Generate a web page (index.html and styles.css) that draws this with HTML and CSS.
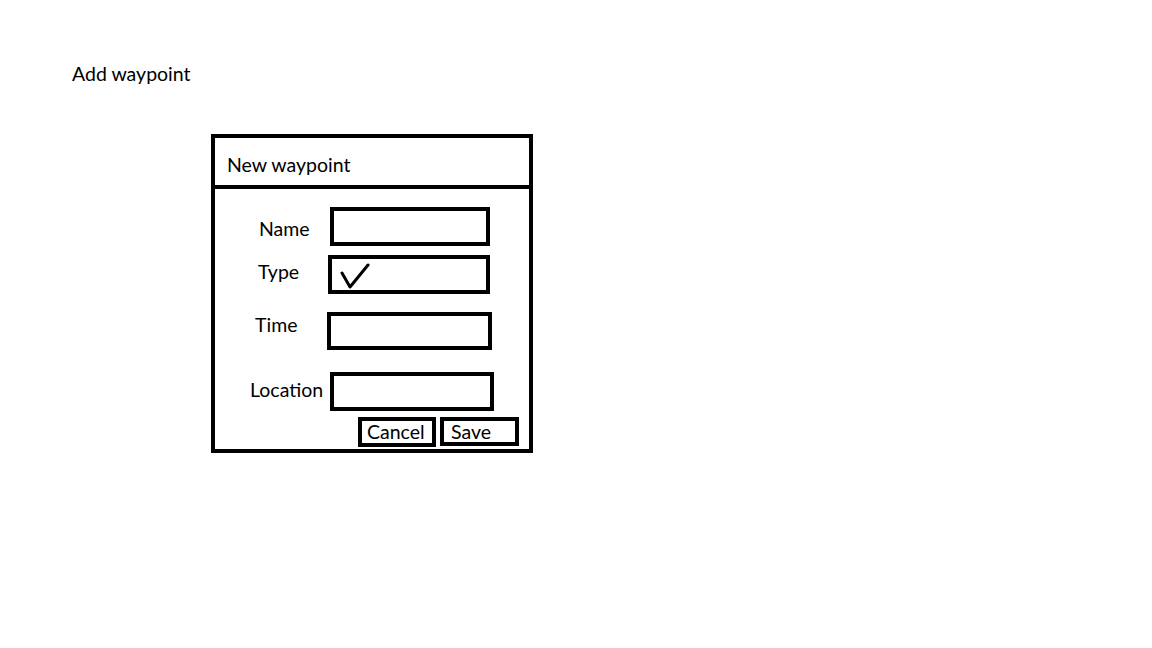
FILE: index.html
```html
<!DOCTYPE html>
<html lang="en">
<head>
<meta charset="utf-8">
<title>Add waypoint</title>
<link rel="stylesheet" href="styles.css">
</head>
<body>
  <div class="page">
    <h1 class="page-title">Add waypoint</h1>
    <div class="dialog">
      <div class="dialog-header">New waypoint</div>
      <div class="dialog-body">
        <div class="row row-name">
          <span class="label">Name</span>
          <div class="field"></div>
        </div>
        <div class="row row-type">
          <span class="label">Type</span>
          <div class="field">
            <svg class="check" width="30" height="26" viewBox="0 0 30 26"><path d="M2 10 L10 24 L28 2" fill="none" stroke="#000" stroke-width="3" stroke-linecap="round" stroke-linejoin="round"/></svg>
          </div>
        </div>
        <div class="row row-time">
          <span class="label">Time</span>
          <div class="field"></div>
        </div>
        <div class="row row-location">
          <span class="label">Location</span>
          <div class="field"></div>
        </div>
        <div class="actions">
          <div class="btn btn-cancel">Cancel</div>
          <div class="btn btn-save">Save</div>
        </div>
      </div>
    </div>
  </div>
</body>
</html>
```

FILE: styles.css
```css
html, body {
  margin: 0;
  padding: 0;
  background: #fff;
}

body {
  font-family: Lato, "Liberation Sans", sans-serif;
  font-size: 19.5px;
  color: #000;
  width: 1152px;
  height: 648px;
  overflow: hidden;
}

.page {
  display: flex;
  flex-direction: column;
  align-items: flex-start;
}

.page-title {
  margin: 64px 0 0 72px;
  font-size: 19.5px;
  font-weight: normal;
  line-height: 20px;
}

.dialog {
  margin: 50px 0 0 211px;
  width: 322px;
  height: 319px;
  box-sizing: border-box;
  border: 4px solid #000;
  display: flex;
  flex-direction: column;
}

.dialog-header {
  height: 51px;
  box-sizing: border-box;
  padding: 17px 0 0 12px;
  line-height: 20px;
  border-bottom: 4px solid #000;
}

.dialog-body {
  display: flex;
  flex-direction: column;
  padding-left: 35px;
}

.row {
  display: flex;
  align-items: flex-start;
}

.label {
  width: 80px;
  box-sizing: border-box;
  line-height: 20px;
  white-space: nowrap;
}

.field {
  box-sizing: border-box;
  border: 4px solid #000;
  height: 39px;
  width: 162px;
  display: flex;
  align-items: flex-start;
}

.row-name { margin-top: 18px; }
.row-name .label { padding-left: 9px; margin-top: 12px; }
.row-name .field { width: 160px; }

.row-type { margin-top: 9px; }
.row-type .label { padding-left: 8px; margin-top: 7px; }
.row-type .field { margin-left: -2px; }

.row-time { margin-top: 18px; }
.row-time .label { padding-left: 5px; margin-top: 3px; }
.row-time .field { margin-left: -3px; width: 165px; height: 38px; }

.row-location { margin-top: 22px; }
.row-location .label { margin-top: 8px; }
.row-location .field { width: 164px; }

.check {
  margin: 4px 0 0 8px;
  display: block;
}

.actions {
  margin-top: 6px;
  display: flex;
  justify-content: flex-end;
  gap: 4px;
  padding-right: 10px;
}

.btn {
  box-sizing: border-box;
  border: 4px solid #000;
  height: 30px;
  line-height: 22px;
  white-space: nowrap;
}

.btn-cancel {
  width: 78px;
  padding-left: 5px;
}

.btn-save {
  width: 79px;
  height: 29px;
  padding-left: 7px;
}
```
